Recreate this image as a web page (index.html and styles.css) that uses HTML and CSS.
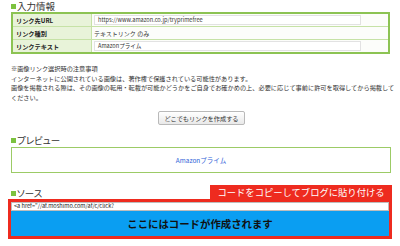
FILE: index.html
```html
<!DOCTYPE html>
<html lang="ja">
<head>
  <meta charset="UTF-8">
  <title>リンク作成</title>
  <link rel="stylesheet" href="styles.css">
</head>
<body>
  <div class="page">
    <h2 class="heading"><span class="mark"></span>入力情報</h2>
    <table class="form-table">
      <tr>
        <th>リンク先URL</th>
        <td><div class="field">https://www.amazon.co.jp/tryprimefree</div></td>
      </tr>
      <tr>
        <th>リンク種別</th>
        <td>テキストリンク のみ</td>
      </tr>
      <tr>
        <th>リンクテキスト</th>
        <td><div class="field">Amazonプライム</div></td>
      </tr>
    </table>

    <div class="notes">
      <p>※画像リンク選択時の注意事項</p>
      <p>インターネットに公開されている画像は、著作権で保護されている可能性があります。</p>
      <p>画像を掲載される際は、その画像の転用・転載が可能かどうかをご自身でお確かめの上、必要に応じて事前に許可を取得してから掲載して</p>
      <p>ください。</p>
    </div>

    <div class="actions">
      <button class="btn">どこでもリンクを作成する</button>
    </div>

    <h2 class="heading"><span class="mark"></span>プレビュー</h2>
    <div class="preview">
      <a href="#">Amazonプライム</a>
    </div>

    <div class="source-head">
      <h2 class="heading"><span class="mark"></span>ソース</h2>
      <div class="tab">コードをコピーしてブログに貼り付ける</div>
    </div>
    <div class="source-box">
      <div class="code">&lt;a href="//af.moshimo.com/af/c/click?</div>
      <div class="placeholder">ここにはコードが作成されます</div>
    </div>
  </div>
</body>
</html>
```

FILE: styles.css
```css
body {
  margin: 0;
  font-family: "Noto Sans CJK JP", "Noto Sans", sans-serif;
  color: #222;
  background: #fff;
}

.page {
  padding: 1px 8px 0 11px;
}

.heading {
  margin: 0;
  height: 11px;
  display: flex;
  align-items: center;
  font-size: 9.5px;
  font-weight: normal;
  line-height: 11px;
  font-feature-settings: "palt";
  color: #333;
}

.mark {
  width: 5px;
  height: 5px;
  margin-right: 1px;
  background: #7cc23f;
}

.form-table {
  width: 379px;
  border-collapse: collapse;
  border: 2px solid #8cc353;
  font-size: 6px;
}

.form-table th,
.form-table td {
  height: 12px;
  padding: 0 2px;
  border-bottom: 1px solid #c6e2a6;
  text-align: left;
  white-space: nowrap;
}

.form-table tr:last-child th,
.form-table tr:last-child td {
  border-bottom: none;
}

.form-table th {
  width: 73px;
  padding-left: 3px;
  background: #e8f3d9;
  border-right: 1px solid #c6e2a6;
  font-size: 6.2px;
  font-weight: bold;
}

.form-table td {
  background: #fcfdfa;
  color: #333;
}

.field {
  width: 262px;
  height: 8px;
  padding-left: 3px;
  border: 1px solid #e2e2e2;
  background: #fff;
  font-size: 5.6px;
  line-height: 8px;
}

.notes {
  margin-top: 10px;
  font-size: 6.2px;
  line-height: 9.6px;
  color: #333;
}

.notes p {
  margin: 0;
  white-space: nowrap;
}

.actions {
  display: flex;
  justify-content: center;
  margin-top: 9px;
  padding-right: 0;
}

.btn {
  width: 87px;
  height: 14px;
  padding: 0;
  border: 1px solid #b9b9b9;
  border-radius: 2px;
  background: linear-gradient(#ffffff, #e9e9e9);
  font-family: "Noto Sans CJK JP", sans-serif;
  font-size: 6.2px;
  color: #333;
}

.actions + .heading {
  margin-top: 10px;
}

.preview {
  width: 378px;
  height: 24px;
  margin-top: 1px;
  border: 1.5px solid #9ccb66;
  display: flex;
  justify-content: center;
  align-items: center;
  font-size: 6.5px;
}

.preview a {
  color: #2f62d8;
  text-decoration: none;
}

.source-head {
  display: flex;
  justify-content: space-between;
  align-items: flex-end;
  margin-top: 12px;
}

.source-head .heading {
  margin-bottom: 0;
}

.tab {
  width: 182px;
  height: 14px;
  margin-right: 0;
  background: #ee2b1f;
  color: #fff;
  font-size: 9.3px;
  line-height: 14px;
  text-align: center;
  white-space: nowrap;
}

.source-box {
  width: 378px;
  margin-left: -3px;
  border: 3px solid #ee2b1f;
  background: #0a9ef2;
}

.code {
  height: 7px;
  padding: 0 2px;
  border: 1px solid #bdbdbd;
  background: #fff;
  font-size: 5.6px;
  line-height: 7px;
  white-space: nowrap;
  overflow: hidden;
}

.placeholder {
  height: 25px;
  display: flex;
  justify-content: center;
  align-items: center;
  font-size: 10.4px;
  font-weight: bold;
  color: #111;
}
```
